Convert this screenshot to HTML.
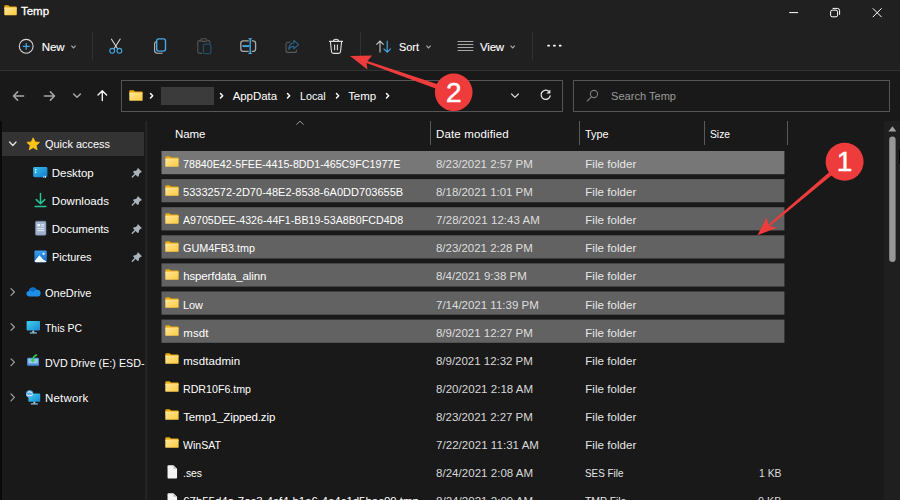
<!DOCTYPE html>
<html lang="en"><head><meta charset="utf-8"><title>Temp</title>
<style>
*{box-sizing:border-box}
html,body{margin:0;padding:0}
body{width:900px;height:500px;overflow:hidden;position:relative;background:#191919;font-family:"Liberation Sans",sans-serif;font-size:11.5px;color:#fff}
.t{position:absolute;white-space:pre;line-height:14px;height:14px}
.row{position:absolute;left:161.5px;width:623px;height:23px}
.ic{position:absolute;overflow:visible}
.abs{position:absolute}
.top{position:absolute;left:0;top:0;width:900px;height:70px;background:#202020}
.hline{position:absolute;left:0;top:70px;width:900px;height:1px;background:#343434}
.vdiv{position:absolute;width:1px;background:#313131;top:32px;height:28px}
.box{position:absolute;top:80px;height:32px;border:1px solid #555;background:#191919}
.cdiv{position:absolute;top:121px;height:24px;width:1px;background:#5a5a5a}
.num{font-family:"Liberation Sans",sans-serif;font-size:28px;fill:#fff;stroke:#fff;stroke-width:.5px;text-anchor:middle}

</style></head>
<body>
<svg width="0" height="0" style="position:absolute">
<defs>
<linearGradient id="fg" x1="0" y1="0" x2="1" y2="1"><stop offset="0" stop-color="#ffe79a"/><stop offset="1" stop-color="#ffc93a"/></linearGradient>
<g id="fold"><path d="M0.3 1.2 Q0.3 0.2 1.3 0.2 H4.6 L6 1.6 H12.6 Q13.6 1.6 13.6 2.6 V4 H0.3 Z" fill="#e9a80f"/><rect x="0.3" y="2.6" width="13.3" height="8.2" rx="0.9" fill="url(#fg)"/></g>
<g id="file"><path d="M0.5 1.2 Q0.5 0.3 1.4 0.3 H6 L9.5 3.8 V12.8 Q9.5 13.7 8.6 13.7 H1.4 Q0.5 13.7 0.5 12.8 Z" fill="#f4f4f4"/><path d="M6 0.3 L9.5 3.8 H6.8 Q6 3.8 6 3 Z" fill="#bdbdbd"/></g>
<g id="chev"><path d="M0.5 0.5 L2.7 2.8 L0.5 5.1" fill="none" stroke="#fff" stroke-width="1.45" stroke-linecap="round" stroke-linejoin="round"/></g>
<g id="pin"><path d="M0.5 9.4 L3.8 6.1" stroke="#a9b3bb" stroke-width="1.4" stroke-linecap="round"/><path d="M6 0.2 L10.2 4.4 L8.7 5 L7.3 6.4 L7 8.6 L5.8 9.2 L1.3 4.7 L1.9 3.5 L4.1 3.2 L5.5 1.8 Z" fill="#a9b3bb"/></g>
<g id="schev"><path d="M0.6 0.6 L4 4 L0.6 7.4" fill="none" stroke="#a0a0a0" stroke-width="1.2" stroke-linecap="round" stroke-linejoin="round"/></g>
</defs></svg>
<div class="top"></div>
<div class="hline"></div>
<!-- title -->
<svg class="ic" style="left:4px;top:4.8px" width="13.2" height="10.4" viewBox="0 0 14 11" preserveAspectRatio="none"><use href="#fold"/></svg>
<!-- window controls -->
<svg class="ic" style="left:780px;top:0" width="120" height="26" viewBox="0 0 120 26" fill="none" stroke="#fff" stroke-width="1">
<path d="M9.2 12.6 H18.1"/>
<rect x="50.6" y="10.2" width="7" height="6.6" rx="1.6"/><path d="M52.6 8.4 H57.4 Q59.6 8.4 59.6 10.6 V14.8"/>
<path d="M92.8 8.3 L101.6 17.1 M101.6 8.3 L92.8 17.1"/>
</svg>
<!-- toolbar -->
<svg class="ic" style="left:0;top:30px" width="580" height="34" viewBox="0 30 580 34" fill="none">
<!-- New -->
<circle cx="26.2" cy="46.3" r="6.9" stroke="#dadada" stroke-width="1.1"/>
<path d="M26.2 42.9 V49.7 M22.8 46.3 H29.6" stroke="#45a8e6" stroke-width="1.2"/>
<path d="M71.4 45.6 L73.5 47.8 L75.6 45.6" stroke="#aaa" stroke-width="1.2"/>
<!-- scissors -->
<path d="M111.2 38.8 L117.6 48.8 M120.4 38.8 L114 48.8" stroke="#d8d8d8" stroke-width="1.1"/>
<circle cx="112.2" cy="50.8" r="2.4" stroke="#45a8e6" stroke-width="1.1"/>
<circle cx="119.4" cy="50.8" r="2.4" stroke="#45a8e6" stroke-width="1.1"/>
<!-- copy -->
<path d="M156.2 41.6 Q154.6 41.9 154.6 43.8 V50.6 Q154.6 53.2 157.2 53.2 H162.6" stroke="#b8b8b8" stroke-width="1.1"/>
<rect x="156.7" y="38.9" width="8.8" height="12.2" rx="2" stroke="#45a8e6" stroke-width="1.4"/>
<!-- paste (disabled) -->
<path d="M201 40.6 H199.4 Q197.8 40.6 197.8 42.2 V51.8 Q197.8 53.4 199.4 53.4 H202 M207.4 40.6 H208.4 Q210 40.6 210 42.2 V43.4" stroke="#565656" stroke-width="1.1"/>
<rect x="200.8" y="38.8" width="6" height="2.6" rx="1.2" stroke="#565656" stroke-width="1.1"/>
<rect x="203.4" y="44.2" width="7.4" height="9.4" rx="1.4" stroke="#214d6b" stroke-width="1.3"/>
<!-- rename -->
<rect x="240.8" y="40.8" width="14.8" height="10.6" rx="2.4" stroke="#a9a9a9" stroke-width="1.3"/>
<path d="M250.2 39 V53.4" stroke="#202020" stroke-width="3"/>
<path d="M242.4 46.1 H249.4" stroke="#45a8e6" stroke-width="1.9"/>
<path d="M250.2 39 V53.4" stroke="#45a8e6" stroke-width="1.4"/><path d="M247.8 38.3 H252.6 L250.2 40.3 Z M247.8 54 H252.6 L250.2 52 Z" fill="#45a8e6"/>
<!-- share (disabled) -->
<path d="M290.6 42.2 H288 Q286 42.2 286 44.2 V50.4 Q286 52.4 288 52.4 H294.6 Q296.6 52.4 296.6 50.4 V49.8" stroke="#585858" stroke-width="1.1"/>
<path d="M293.8 40.4 L298.6 44.6 L293.8 48.8 V46.4 Q290.4 46.2 288.8 49.4 Q289 43.4 293.8 42.8 Z" stroke="#2a6088" stroke-width="1.2" stroke-linejoin="round"/>
<!-- trash -->
<path d="M329 41.4 H343 M333.4 41.2 Q333.6 39.2 336 39.2 Q338.4 39.2 338.6 41.2 M330.4 41.6 L331.5 51.8 Q331.7 53.4 333.3 53.4 H338.7 Q340.3 53.4 340.5 51.8 L341.6 41.6" stroke="#e0e0e0" stroke-width="1.1"/>
<path d="M334.6 44.4 V50.2 M337.4 44.4 V50.2" stroke="#e0e0e0" stroke-width="1.1"/>
<!-- sort -->
<path d="M380 52.4 V41.2 M376.4 44.6 L380 41 L383.6 44.6" stroke="#c8c8c8" stroke-width="1.1"/>
<path d="M387.2 40.8 V52 M383.6 48.6 L387.2 52.2 L390.8 48.6" stroke="#45a8e6" stroke-width="1.1"/>
<path d="M426.4 45.6 L428.5 47.8 L430.6 45.6" stroke="#aaa" stroke-width="1.2"/>
<!-- view -->
<path d="M457.6 41.5 H473.4 M457.6 44.5 H473.4 M457.6 47.5 H473.4 M457.6 50.5 H473.4" stroke="#a8a8a8" stroke-width="1"/>
<path d="M510.6 45.6 L512.7 47.8 L514.8 45.6" stroke="#aaa" stroke-width="1.2"/>
<!-- more -->
<rect x="547.3" y="44.7" width="2.6" height="1.8" rx=".5" fill="#fff"/><rect x="553.1" y="44.7" width="2.6" height="1.8" rx=".5" fill="#fff"/><rect x="558.9" y="44.7" width="2.6" height="1.8" rx=".5" fill="#fff"/>
</svg>
<div class="vdiv" style="left:92px"></div>
<div class="vdiv" style="left:360.4px"></div>
<div class="vdiv" style="left:532px"></div>
<!-- nav arrows -->
<svg class="ic" style="left:0;top:84px" width="120" height="24" viewBox="0 84 120 24" fill="none" stroke-linecap="round" stroke-linejoin="round">
<path d="M23.6 96 H14 M17.6 91.9 L13.5 96 L17.6 100.1" stroke="#a6a6a6" stroke-width="1.5"/>
<path d="M44.4 96 H54 M50.4 91.9 L54.5 96 L50.4 100.1" stroke="#a6a6a6" stroke-width="1.5"/>
<path d="M73.6 94 L77 97.3 L80.4 94" stroke="#a6a6a6" stroke-width="1.5"/>
<path d="M102.3 100.6 V91.2 M98 95 L102.3 90.8 L106.6 95" stroke="#f2f2f2" stroke-width="1.4"/>
</svg>
<!-- address box -->
<div class="box" style="left:121px;width:442px"></div>
<svg class="ic" style="left:129px;top:89.5px" width="14" height="11" viewBox="0 0 14 11"><use href="#fold"/></svg>
<svg class="ic" style="left:149.8px;top:93.4px" width="4" height="6" viewBox="0 0 4 6"><use href="#chev"/></svg>
<div class="abs" style="left:161px;top:87px;width:52.5px;height:17.5px;background:#3b3b3b"></div>
<svg class="ic" style="left:220.2px;top:93.4px" width="4" height="6" viewBox="0 0 4 6"><use href="#chev"/></svg>
<svg class="ic" style="left:287.4px;top:93.4px" width="4" height="6" viewBox="0 0 4 6"><use href="#chev"/></svg>
<svg class="ic" style="left:335.8px;top:93.4px" width="4" height="6" viewBox="0 0 4 6"><use href="#chev"/></svg>
<svg class="ic" style="left:385.8px;top:93.4px" width="4" height="6" viewBox="0 0 4 6"><use href="#chev"/></svg>
<svg class="ic" style="left:505px;top:86px" width="55" height="20" viewBox="505 86 55 20" fill="none" stroke-linecap="round" stroke-linejoin="round">
<path d="M511.6 94 L515 97.4 L518.4 94" stroke="#d8d8d8" stroke-width="1.2"/>
<path d="M548.4 91 A4.6 4.6 0 1 0 550.2 95.8" stroke="#e4e4e4" stroke-width="1.3"/>
<path d="M550.4 89.6 V93.6 H546.4 Z" fill="#e4e4e4" stroke="none"/>
</svg>
<!-- search box -->
<div class="box" style="left:573px;width:317px"></div>
<svg class="ic" style="left:585px;top:88px" width="15" height="15" viewBox="585 88 15 15" fill="none" stroke="#7c7c7c" stroke-width="1.1" stroke-linecap="round">
<circle cx="594" cy="94" r="3.6"/><path d="M591.4 96.8 L587.2 101"/>
</svg>
<!-- sidebar -->
<div class="abs" style="left:0;top:121px;width:2px;height:379px;background:#0a0a0a"></div>
<svg class="ic" style="left:140px;top:121px" width="10" height="379" viewBox="140 121 10 379"><rect x="145.3" y="121" width="1.9" height="379" fill="#272727"/></svg>
<div class="abs" style="left:2px;top:132px;width:142px;height:24.3px;background:#333"></div>
<svg class="ic" style="left:0;top:121px" width="146" height="300" viewBox="0 121 146 300" fill="none">
<path d="M9.6 142 L12.8 145.4 L16 142" stroke="#dcdcdc" stroke-width="1.4" stroke-linecap="round" stroke-linejoin="round"/>
<path d="M33.2 137.8 L35.1 141.9 L39.5 142.4 L36.2 145.4 L37.1 149.8 L33.2 147.6 L29.3 149.8 L30.2 145.4 L26.9 142.4 L31.3 141.9 Z" fill="#fcc419" stroke="#fcc419" stroke-width="0.8" stroke-linejoin="round"/>
<!-- desktop -->
<defs><linearGradient id="dg" x1="0" y1="0" x2="1" y2="1"><stop offset="0" stop-color="#35c1f1"/><stop offset="1" stop-color="#1278c8"/></linearGradient>
<linearGradient id="pg" x1="0" y1="0" x2="0" y2="1"><stop offset="0" stop-color="#3aa0f0"/><stop offset="1" stop-color="#1668c8"/></linearGradient>
<linearGradient id="mg" x1="0" y1="0" x2="1" y2="1"><stop offset="0" stop-color="#3fd0f0"/><stop offset="1" stop-color="#1a8ad0"/></linearGradient></defs>
<rect x="33.2" y="167" width="14.2" height="10.2" rx="1.4" fill="url(#dg)"/>
<rect x="35" y="169" width="1.4" height="1.4" fill="#e8f8ff"/><rect x="35" y="171.6" width="1.4" height="1.4" fill="#e8f8ff"/>
<rect x="43.4" y="175.8" width="1" height="2" fill="#bfe8ff"/><rect x="45" y="175.8" width="1" height="2" fill="#bfe8ff"/>
<!-- downloads -->
<path d="M40.5 193.4 V203.4 M36.3 199.6 L40.5 203.8 L44.7 199.6" stroke="#25c595" stroke-width="1.5" stroke-linecap="round" stroke-linejoin="round"/>
<path d="M35.2 206.4 H45.8" stroke="#25c595" stroke-width="1.5" stroke-linecap="round"/>
<!-- documents -->
<rect x="35.4" y="221.2" width="10.6" height="14" rx="1.3" fill="#9fb2cc"/>
<rect x="35.4" y="221.2" width="10.6" height="14" rx="1.3" fill="none" stroke="#6f86a6" stroke-width="0.6"/>
<rect x="37.2" y="224" width="3" height="2.4" fill="#eef3fa"/><path d="M41.2 224.6 H44.2 M41.2 226.2 H44.2 M37.2 228.6 H44.2 M37.2 230.6 H44.2" stroke="#eef3fa" stroke-width="0.9"/>
<!-- pictures -->
<rect x="34.4" y="250.6" width="12.4" height="11.6" rx="1.4" fill="url(#pg)"/>
<path d="M34.6 261 L39.4 255.2 L43.2 259.4 L46.6 261.6 Q46.4 262.2 45.4 262.2 H35.8 Q34.8 262.2 34.6 261 Z" fill="#f2f8ff"/>
<circle cx="43.6" cy="253.8" r="1.1" fill="#f2f8ff"/>
<!-- pins -->
<g transform="translate(131.8 167.6)"><use href="#pin"/></g>
<g transform="translate(131.8 195.7)"><use href="#pin"/></g>
<g transform="translate(131.8 223.8)"><use href="#pin"/></g>
<g transform="translate(131.8 251.9)"><use href="#pin"/></g>
<!-- chevrons -->
<g transform="translate(10.4 288)"><use href="#schev"/></g>
<g transform="translate(10.4 323)"><use href="#schev"/></g>
<g transform="translate(10.4 358.2)"><use href="#schev"/></g>
<g transform="translate(10.4 393.4)"><use href="#schev"/></g>
<!-- onedrive cloud -->
<path d="M29.6 296.4 Q26.4 296.4 26.4 293.6 Q26.4 291.2 29 290.8 Q29.6 287.6 33 287.6 Q35.4 287.6 36.6 289.8 Q40.6 289.6 40.6 293.2 Q40.6 296.4 37.6 296.4 Z" fill="#1e8fe6"/>
<path d="M29 290.8 Q29.6 287.6 33 287.6 Q35.4 287.6 36.6 289.8 Q34.6 290.2 33.6 292 Q31.4 290.6 29 290.8 Z" fill="#0f6fc8"/>
<!-- this pc -->
<rect x="26.6" y="321" width="13.4" height="9.6" rx="1" fill="url(#mg)"/>
<rect x="32.4" y="330.6" width="1.8" height="2" fill="#9fd8f0"/><rect x="29.8" y="332.4" width="7" height="1.1" fill="#9fd8f0"/>
<!-- dvd drive -->
<rect x="27.1" y="357.8" width="11.9" height="7.9" rx="1" fill="#4d8fdc"/>
<rect x="28.3" y="358.8" width="9.5" height="4.6" rx="0.6" fill="#9ac6f2"/>
<path d="M36.6 355 Q33.2 356.2 32.8 360" stroke="#2fd24a" stroke-width="1.5" fill="none" stroke-linecap="round"/><path d="M30.2 359.6 H35.4 L32.6 362.8 Z" fill="#2fd24a"/>
<!-- network -->
<rect x="28.4" y="393.6" width="11.8" height="8.2" rx="0.9" fill="url(#mg)"/>
<rect x="33.4" y="401.8" width="1.8" height="1.8" fill="#9fd8f0"/><rect x="30.8" y="403.4" width="7" height="1.1" fill="#9fd8f0"/>
<circle cx="29.7" cy="394" r="3.7" fill="#58aee8"/><path d="M27.6 392.4 Q29.6 391 31.8 392.6 M26.4 394.8 Q29.6 396.8 33 394.6" stroke="#e6f6ff" stroke-width="1"/>
</svg>
<!-- column header -->
<div class="cdiv" style="left:430px"></div>
<div class="cdiv" style="left:579px"></div>
<div class="cdiv" style="left:704px"></div>
<div class="cdiv" style="left:787px"></div>
<svg class="ic" style="left:295px;top:120px" width="10" height="6" viewBox="0 0 10 6" fill="none"><path d="M1.4 4.6 L5 1.2 L8.6 4.6" stroke="#9a9a9a" stroke-width="1"/></svg>

<svg class="ic" style="left:0;top:0" width="900" height="500" viewBox="0 0 900 500"><rect x="161.5" y="151.00" width="622.9" height="23.2" fill="#777"/><rect x="161.5" y="179.10" width="622.9" height="23.2" fill="#626262"/><rect x="161.5" y="207.20" width="622.9" height="23.2" fill="#626262"/><rect x="161.5" y="235.30" width="622.9" height="23.2" fill="#626262"/><rect x="161.5" y="263.40" width="622.9" height="23.2" fill="#626262"/><rect x="161.5" y="291.50" width="622.9" height="23.2" fill="#626262"/><rect x="161.5" y="319.60" width="622.9" height="23.2" fill="#626262"/></svg>
<svg class="ic" style="left:165px;top:156.40px" width="14" height="11" viewBox="0 0 14 11"><use href="#fold"/></svg>
<svg class="ic" style="left:165px;top:184.50px" width="14" height="11" viewBox="0 0 14 11"><use href="#fold"/></svg>
<svg class="ic" style="left:165px;top:212.60px" width="14" height="11" viewBox="0 0 14 11"><use href="#fold"/></svg>
<svg class="ic" style="left:165px;top:240.70px" width="14" height="11" viewBox="0 0 14 11"><use href="#fold"/></svg>
<svg class="ic" style="left:165px;top:268.80px" width="14" height="11" viewBox="0 0 14 11"><use href="#fold"/></svg>
<svg class="ic" style="left:165px;top:296.90px" width="14" height="11" viewBox="0 0 14 11"><use href="#fold"/></svg>
<svg class="ic" style="left:165px;top:325.00px" width="14" height="11" viewBox="0 0 14 11"><use href="#fold"/></svg>
<svg class="ic" style="left:165px;top:353.10px" width="14" height="11" viewBox="0 0 14 11"><use href="#fold"/></svg>
<svg class="ic" style="left:165px;top:381.20px" width="14" height="11" viewBox="0 0 14 11"><use href="#fold"/></svg>
<svg class="ic" style="left:165px;top:409.30px" width="14" height="11" viewBox="0 0 14 11"><use href="#fold"/></svg>
<svg class="ic" style="left:165px;top:437.40px" width="14" height="11" viewBox="0 0 14 11"><use href="#fold"/></svg>
<svg class="ic" style="left:166.9px;top:464.60px" width="10.6" height="13.8" viewBox="0 0 10 14" preserveAspectRatio="none"><use href="#file"/></svg>
<svg class="ic" style="left:166.9px;top:492.70px" width="10.6" height="13.8" viewBox="0 0 10 14" preserveAspectRatio="none"><use href="#file"/></svg>
<span class="t" style="top:157px;color:#fff;left:183.20px;transform:scaleX(0.9291);transform-origin:0 0;">78840E42-5FEE-4415-8DD1-465C9FC1977E</span>
<span class="t" style="top:157px;color:#dedede;left:436.00px;letter-spacing:-0.023px;">8/23/2021 2:57 PM</span>
<span class="t" style="top:157px;color:#e8e8e8;left:585.20px;letter-spacing:0.064px;">File folder</span>
<span class="t" style="top:185px;color:#fff;left:183.20px;transform:scaleX(0.9593);transform-origin:0 0;">53332572-2D70-48E2-8538-6A0DD703655B</span>
<span class="t" style="top:185px;color:#dedede;left:436.00px;letter-spacing:-0.023px;">8/18/2021 1:01 PM</span>
<span class="t" style="top:185px;color:#e8e8e8;left:585.20px;letter-spacing:0.064px;">File folder</span>
<span class="t" style="top:213px;color:#fff;left:183.20px;transform:scaleX(0.9259);transform-origin:0 0;">A9705DEE-4326-44F1-BB19-53A8B0FCD4D8</span>
<span class="t" style="top:213px;color:#dedede;left:436.00px;letter-spacing:0.058px;">7/28/2021 12:43 AM</span>
<span class="t" style="top:213px;color:#e8e8e8;left:585.20px;letter-spacing:0.064px;">File folder</span>
<span class="t" style="top:241px;color:#fff;left:183.20px;transform:scaleX(0.9389);transform-origin:0 0;">GUM4FB3.tmp</span>
<span class="t" style="top:241px;color:#dedede;left:436.00px;letter-spacing:-0.023px;">8/23/2021 2:28 PM</span>
<span class="t" style="top:241px;color:#e8e8e8;left:585.20px;letter-spacing:0.064px;">File folder</span>
<span class="t" style="top:269px;color:#fff;left:183.20px;letter-spacing:-0.128px;">hsperfdata_alinn</span>
<span class="t" style="top:269px;color:#dedede;left:436.00px;">8/4/2021 9:38 PM</span>
<span class="t" style="top:269px;color:#e8e8e8;left:585.20px;letter-spacing:0.064px;">File folder</span>
<span class="t" style="top:298px;color:#fff;left:183.20px;transform:scaleX(0.9474);transform-origin:0 0;">Low</span>
<span class="t" style="top:298px;color:#dedede;left:436.00px;">7/14/2021 11:39 PM</span>
<span class="t" style="top:298px;color:#e8e8e8;left:585.20px;letter-spacing:0.064px;">File folder</span>
<span class="t" style="top:326px;color:#fff;left:183.20px;letter-spacing:0.145px;">msdt</span>
<span class="t" style="top:326px;color:#dedede;left:436.00px;letter-spacing:-0.023px;">8/9/2021 12:27 PM</span>
<span class="t" style="top:326px;color:#e8e8e8;left:585.20px;letter-spacing:0.064px;">File folder</span>
<span class="t" style="top:354px;color:#fff;left:183.20px;letter-spacing:0.083px;">msdtadmin</span>
<span class="t" style="top:354px;color:#d8d8d8;left:436.00px;letter-spacing:-0.023px;">8/9/2021 12:32 PM</span>
<span class="t" style="top:354px;color:#e6e6e6;left:585.20px;letter-spacing:0.064px;">File folder</span>
<span class="t" style="top:382px;color:#fff;left:183.20px;transform:scaleX(0.9252);transform-origin:0 0;">RDR10F6.tmp</span>
<span class="t" style="top:382px;color:#d8d8d8;left:436.00px;letter-spacing:0.038px;">8/20/2021 2:18 AM</span>
<span class="t" style="top:382px;color:#e6e6e6;left:585.20px;letter-spacing:0.064px;">File folder</span>
<span class="t" style="top:410px;color:#fff;left:183.20px;letter-spacing:-0.124px;">Temp1_Zipped.zip</span>
<span class="t" style="top:410px;color:#d8d8d8;left:436.00px;letter-spacing:-0.023px;">8/23/2021 2:27 PM</span>
<span class="t" style="top:410px;color:#e6e6e6;left:585.20px;letter-spacing:0.064px;">File folder</span>
<span class="t" style="top:438px;color:#fff;left:183.20px;transform:scaleX(0.9195);transform-origin:0 0;">WinSAT</span>
<span class="t" style="top:438px;color:#d8d8d8;left:436.00px;letter-spacing:0.050px;">7/22/2021 11:31 AM</span>
<span class="t" style="top:438px;color:#e6e6e6;left:585.20px;letter-spacing:0.064px;">File folder</span>
<span class="t" style="top:466px;color:#fff;left:183.20px;transform:scaleX(0.9007);transform-origin:0 0;">.ses</span>
<span class="t" style="top:466px;color:#d8d8d8;left:436.00px;letter-spacing:0.038px;">8/24/2021 2:08 AM</span>
<span class="t" style="top:466px;color:#e6e6e6;left:585.20px;transform:scaleX(0.8581);transform-origin:0 0;">SES File</span>
<span class="t" style="top:466px;color:#dcdcdc;left:759.00px;transform:scaleX(0.9023);transform-origin:0 0;">1 KB</span>
<span class="t" style="top:494px;color:#fff;left:183.20px;letter-spacing:-0.040px;">67b55d4a-7ec3-4ef4-b1e6-4e4c1d5bec09.tmp</span>
<span class="t" style="top:494px;color:#d8d8d8;left:436.00px;letter-spacing:0.038px;">8/24/2021 2:09 AM</span>
<span class="t" style="top:494px;color:#e6e6e6;left:585.20px;transform:scaleX(0.9040);transform-origin:0 0;">TMP File</span>
<span class="t" style="top:494px;color:#dcdcdc;left:758.20px;transform:scaleX(0.9343);transform-origin:0 0;">0 KB</span>
<span class="t" style="top:127px;color:#fff;left:175.00px;letter-spacing:-0.072px;">Name</span>
<span class="t" style="top:127px;color:#fff;left:436.00px;letter-spacing:0.141px;">Date modified</span>
<span class="t" style="top:127px;color:#fff;left:585.20px;transform:scaleX(0.9464);transform-origin:0 0;">Type</span>
<span class="t" style="top:127px;color:#fff;left:710.00px;transform:scaleX(0.8939);transform-origin:0 0;">Size</span>
<span class="t" style="top:137px;color:#fff;left:44.80px;transform:scaleX(0.9504);transform-origin:0 0;">Quick access</span>
<span class="t" style="top:166px;color:#fff;left:51.80px;letter-spacing:-0.055px;">Desktop</span>
<span class="t" style="top:194px;color:#fff;left:51.80px;letter-spacing:0.033px;">Downloads</span>
<span class="t" style="top:222px;color:#fff;left:51.80px;letter-spacing:-0.108px;">Documents</span>
<span class="t" style="top:250px;color:#fff;left:51.80px;transform:scaleX(0.9507);transform-origin:0 0;">Pictures</span>
<span class="t" style="top:286px;color:#fff;left:45.00px;transform:scaleX(0.9572);transform-origin:0 0;">OneDrive</span>
<span class="t" style="top:321px;color:#fff;left:45.00px;transform:scaleX(0.9045);transform-origin:0 0;">This PC</span>
<span class="t" style="top:356px;color:#fff;left:45.00px;transform:scaleX(0.9325);transform-origin:0 0;">DVD Drive (E:) ESD-</span>
<span class="t" style="top:391px;color:#fff;left:45.00px;letter-spacing:0.188px;">Network</span>
<span class="t" style="top:4px;color:#fff;left:21.00px;letter-spacing:-0.031px;-webkit-text-stroke:.3px #fff;">Temp</span>
<span class="t" style="top:40px;color:#fff;left:41.80px;letter-spacing:-0.072px;-webkit-text-stroke:.12px #fff;">New</span>
<span class="t" style="top:40px;color:#fff;left:398.80px;transform:scaleX(0.9481);transform-origin:0 0;-webkit-text-stroke:.12px #fff;">Sort</span>
<span class="t" style="top:40px;color:#fff;left:480.00px;letter-spacing:-0.180px;-webkit-text-stroke:.12px #fff;">View</span>
<span class="t" style="top:89px;color:#fff;left:232.70px;letter-spacing:-0.067px;">AppData</span>
<span class="t" style="top:89px;color:#fff;left:300.00px;transform:scaleX(0.9345);transform-origin:0 0;">Local</span>
<span class="t" style="top:89px;color:#fff;left:348.20px;letter-spacing:-0.081px;">Temp</span>
<span class="t" style="top:89px;color:#9a9a9a;left:611.00px;transform:scaleX(0.9623);transform-origin:0 0;">Search Temp</span>
<!--OVERLAY-->
<!-- scrollbar -->
<div class="abs" style="left:884px;top:121px;width:16px;height:379px;background:#1f1f1f"></div>
<svg class="ic" style="left:884px;top:121px" width="16" height="150" viewBox="884 121 16 150">
<path d="M888.4 131.6 L892.4 126.2 L896.4 131.6 Z" fill="#a0a0a0"/>
<rect x="889.2" y="136.5" width="6.4" height="125.5" rx="3.2" fill="#979797"/>
</svg>
<div class="abs" style="left:898.6px;top:149px;width:2px;height:15px;background:#050505"></div>
<!-- annotations -->
<svg class="ic" style="left:0;top:0" width="900" height="500" viewBox="0 0 900 500">
<path d="M350 56 L372.2 55.6 L367.4 60.9 L438.5 84.5 L436.9 88.9 L366.6 62.9 L367.4 69.4 Z" fill="#ee3b3b"/>
<circle cx="453.7" cy="92.3" r="18.8" fill="#ee3b3b"/>
<path d="M757.4 235.2 L766.6 217.6 L768.3 224.7 L830.3 171.2 L832.9 174.2 L769.6 226.3 L777.6 227.6 Z" fill="#ee3b3b"/>
<circle cx="844.6" cy="161.8" r="19" fill="#ee3b3b"/>
<text class="num" x="453.7" y="102">2</text>
<text class="num" x="844.6" y="171">1</text>
</svg>

</body></html>
